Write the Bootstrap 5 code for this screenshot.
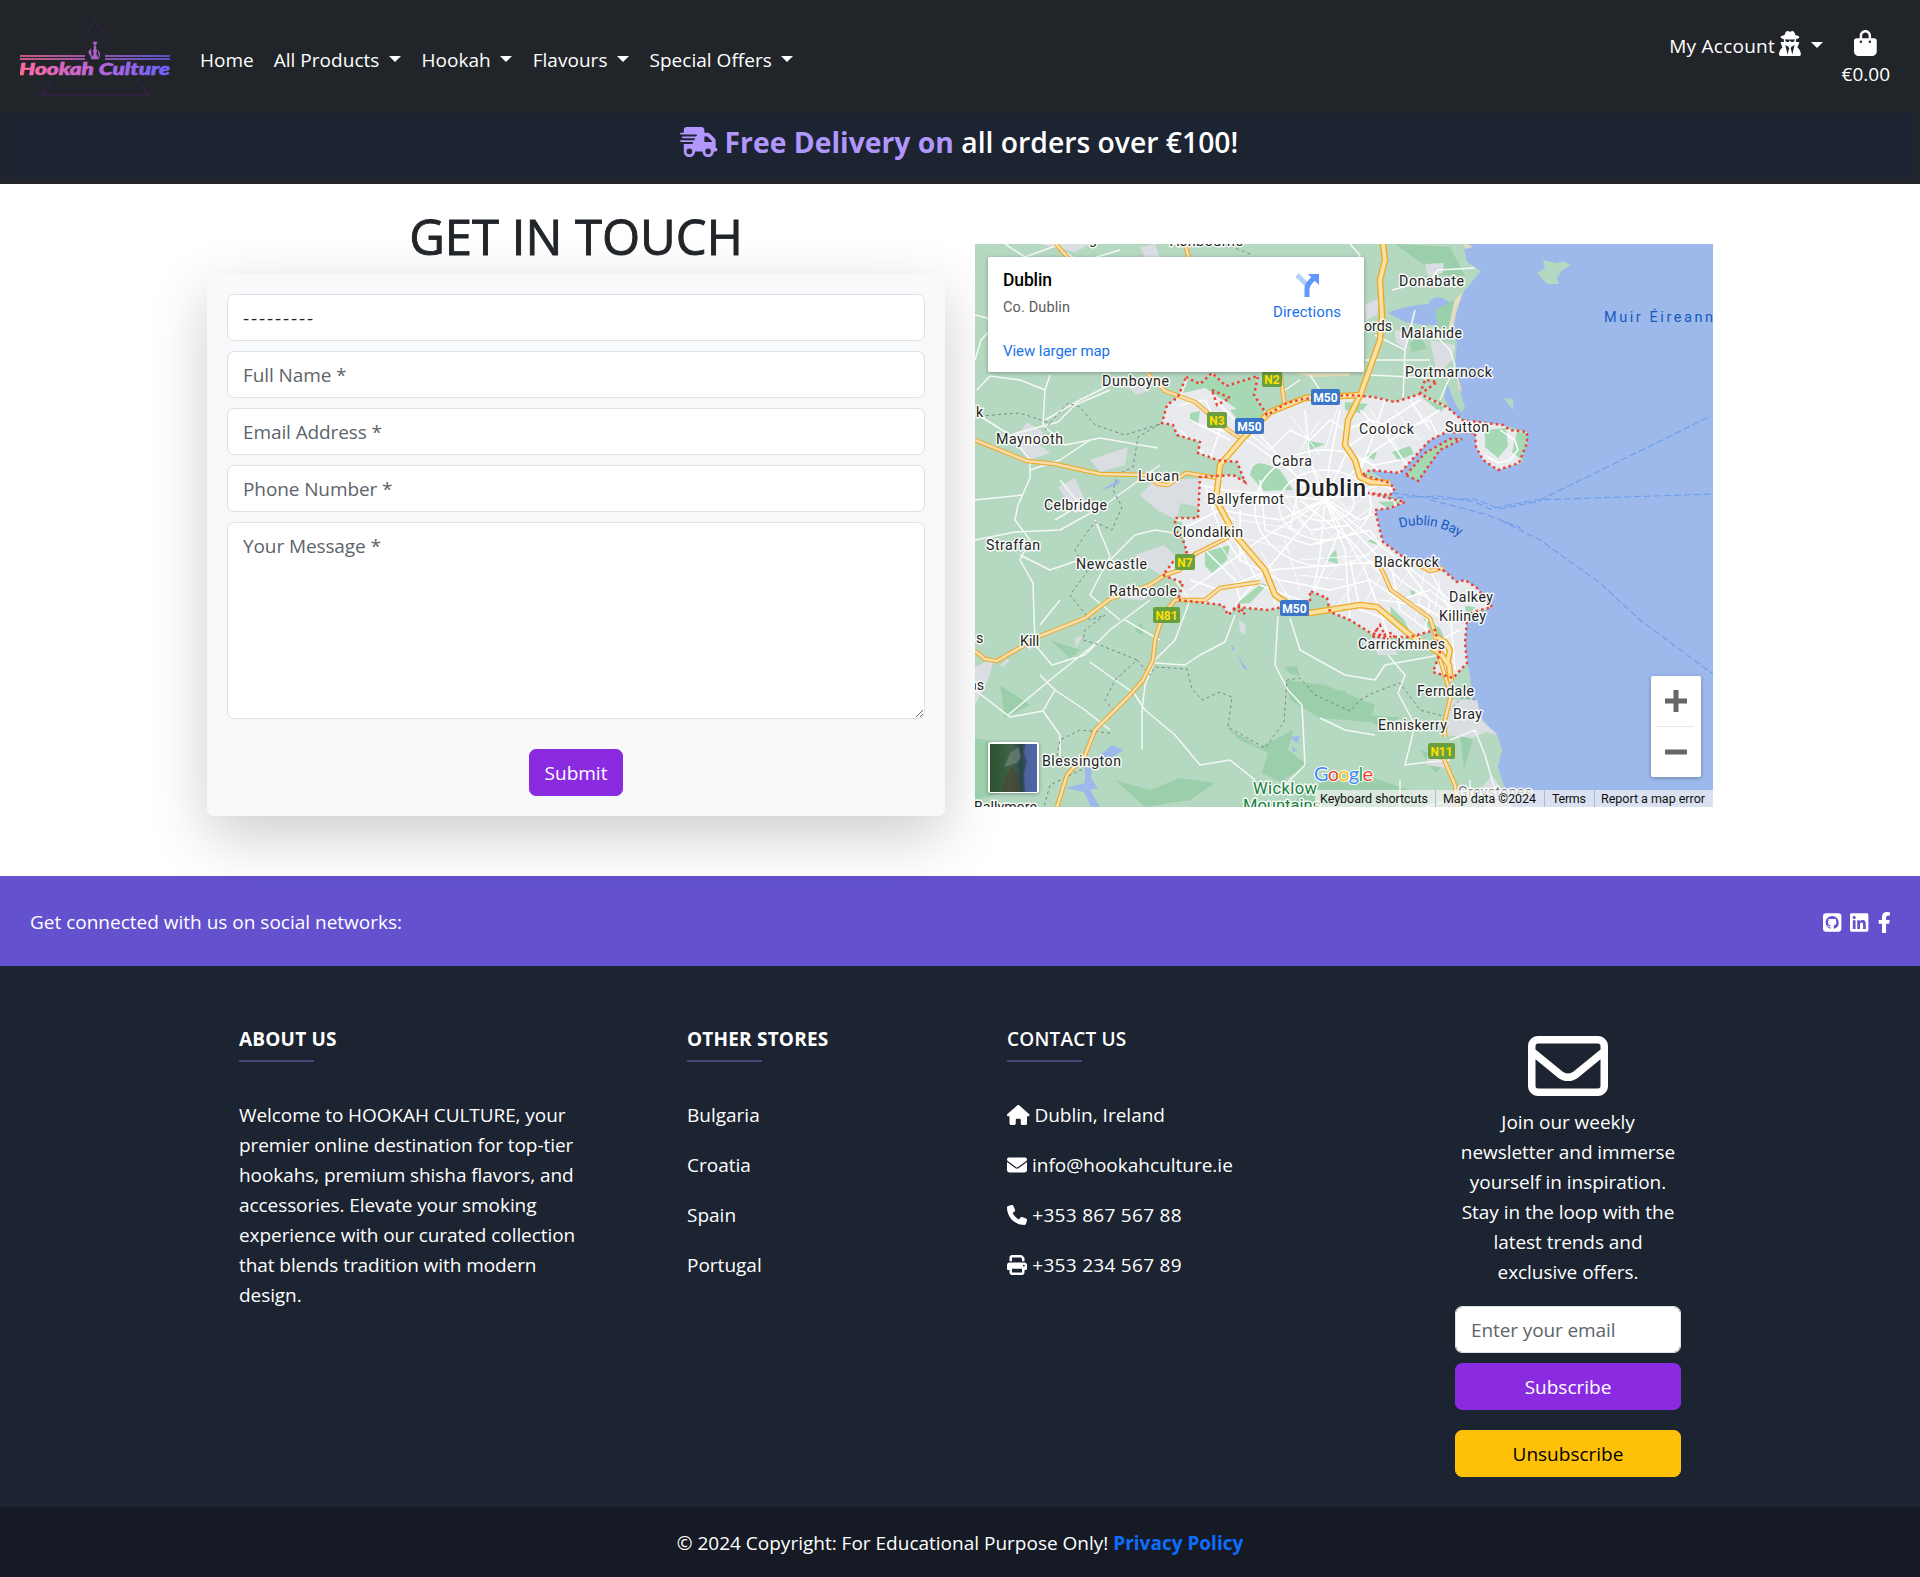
<!DOCTYPE html>
<html lang="en">
<head>
<meta charset="utf-8">
<meta name="viewport" content="width=device-width, initial-scale=1">
<title>Hookah Culture - Contact</title>
<link href="https://cdn.jsdelivr.net/npm/bootstrap@5.3.0/dist/css/bootstrap.min.css" rel="stylesheet">
<style>
html{font-size:20px}
body{font-family:"Open Sans","Noto Sans",sans-serif;font-size:19px;line-height:30px;overflow-x:hidden}
.ico{height:1em;fill:currentColor;overflow:visible;vertical-align:-.125em;font-size:20px}
.site-header{height:184px}
.site-nav{height:113px;padding:6px 20px 0}
.site-nav .nav-link{color:#fff;padding:10px;line-height:30px;white-space:nowrap}
.site-nav .dropdown-toggle::after{margin-left:9.5px;vertical-align:5px;border-top-width:6px;border-left-width:6px;border-right-width:6px}
.menu-main .dropdown-toggle{letter-spacing:.03px;padding-right:10.5px}
.brand-logo{width:150px;height:90px;margin-right:20px}
.account{margin-right:-1px;letter-spacing:.25px;padding-top:1px}
.account .ico{font-size:25px;margin-left:-1px}
.bag .ico{font-size:26px;vertical-align:-.19em}
.bag .nav-link{padding-top:9px}
.delivery{height:66px;margin:0 5px 5px 3px;background:#1c2331;font-size:28.3px;font-weight:600;line-height:58px}
.delivery .ico{font-size:30px}
.lilac{color:#b197fc;font-weight:700}
.eighty{width:80%;max-width:none}
.contact-area{height:692px;padding-top:22px}
.touch-title{font-size:49px;font-weight:500;line-height:60px;margin-bottom:8px;-webkit-text-stroke:.9px #212529}
.contact-form{padding:20px;height:542px;box-shadow:0 20px 60px rgba(0,0,0,.2)}
.contact-form .form-control,.newsletter .form-control{font-size:19px;height:47px;padding:7px 15px;line-height:30px;margin-bottom:10px;border-radius:7px}
.form-control::placeholder{color:#5d646b;opacity:1;letter-spacing:-.1px}
.contact-form select.form-control{letter-spacing:1.9px}
.contact-form textarea.form-control{height:197px;margin-bottom:30px;padding-top:8px}
.btn{font-size:19px;line-height:30px;height:47px;border-radius:7px;padding:7px 15px}
.btn-violet,.btn-violet:hover{background:#8a2be2;border-color:#8a2be2;color:#fff}
.map-frame{display:block;width:100%;height:563px;margin-top:38px;font-family:Roboto,sans-serif}
.social-band{height:90px;background:#6351ce;padding:2px 30px 0}
.social-icons{gap:9px}
.social-icons .ico{font-size:21px}
.social-icons .ico-f{width:12.500px}
.footer-main{background:#1c2331;height:541px;padding-top:58px}
.footer-main h6{font-size:19px;line-height:30px;margin:0;letter-spacing:.2px}
.rule{width:75px;height:2px;background:#484776;margin:6px 0 38px}
.footer-main p{margin-bottom:20px}
.about-text{letter-spacing:-.07px}
.tel{letter-spacing:.3px}
.newsletter{padding-top:12px}
.newsletter p{margin:0 0 19px;letter-spacing:-.05px}
.newsletter .big{font-size:80px;display:block;margin:-10px auto 1px}
.unsub{margin-top:20px}
.copybar{background:#151a25;height:70px;padding-top:2px}
.copybar a{color:#0d6efd;text-decoration:none;font-weight:700}
</style>
</head>
<body>
<header class="site-header bg-dark text-white overflow-hidden">
<nav class="site-nav d-flex align-items-center">
<svg class="brand-logo" viewBox="20 15 150 90">
<defs><linearGradient id="lg" gradientUnits="userSpaceOnUse" x1="20" y1="0" x2="170" y2="0"><stop offset="0" stop-color="#ff6b9d"/><stop offset=".5" stop-color="#bd65d8"/><stop offset="1" stop-color="#6a63ff"/></linearGradient></defs>
<path d="M86 35 95 21 105 35M52 81 41 95H149L138 81" fill="none" stroke="#33204a" stroke-width="1.4"/>
<path d="M20 56H85M105 56H170M20 59H85M105 59H170" stroke="url(#lg)" stroke-width="1.8" opacity=".75"/>
<path d="M93 42h4l-1 3h-2zM94 46h2v4h-2zM93 50h4l-1 4 3 5H91l3-5zM91 49q-4 2-1 6l2 4M98 50q3 4 1 8" fill="#ad60ca" stroke="#ad60ca" stroke-width=".5"/>
<text x="19" y="75" font-family="Lato,sans-serif" font-weight="900" font-style="italic" font-size="16.500" textLength="151" lengthAdjust="spacingAndGlyphs" fill="url(#lg)" stroke="url(#lg)" stroke-width=".6">Hookah Culture</text>
</svg>
<ul class="navbar-nav menu-main flex-row">
<li><a class="nav-link" href="#">Home</a></li>
<li><a class="nav-link dropdown-toggle" href="#">All Products</a></li>
<li><a class="nav-link dropdown-toggle" href="#">Hookah</a></li>
<li><a class="nav-link dropdown-toggle" href="#">Flavours</a></li>
<li><a class="nav-link dropdown-toggle" href="#">Special Offers</a></li>
</ul>
<ul class="navbar-nav flex-row ms-auto">
<li class="account"><a class="nav-link dropdown-toggle" href="#">My Account <svg class="ico" viewBox="0 0 448 512"><path d="M224 16c-6.7 0-10.8-2.8-15.5-6.1C201.9 5.4 194 0 176 0c-30.5 0-52 43.7-66 89.4C62.7 98.1 32 112.2 32 128c0 14.3 25 27.1 64.6 35.9c-.4 4-.6 8-.6 12.1c0 17 3.3 33.2 9.3 48H45.4C38 224 32 230 32 237.4c0 1.7 .3 3.4 1 5l38.8 96.9C28.2 371.8 0 423.8 0 482.3C0 498.7 13.3 512 29.7 512H418.3c16.4 0 29.7-13.3 29.7-29.7c0-58.5-28.2-110.4-71.7-143L415 242.4c.6-1.6 1-3.3 1-5c0-7.4-6-13.4-13.4-13.4H342.7c6-14.8 9.3-31 9.3-48c0-4.1-.2-8.1-.6-12.1C391 155.1 416 142.3 416 128c0-15.8-30.7-29.9-78-38.6C324 43.7 302.5 0 272 0c-18 0-25.9 5.4-32.5 9.9c-4.8 3.3-8.8 6.1-15.5 6.1zm56 208H267.6c-16.5 0-31.1-10.6-36.3-26.2c-2.3-7-12.2-7-14.5 0c-5.2 15.6-19.9 26.2-36.3 26.2H168c-22.1 0-40-17.9-40-40V169.6c28.2 4.1 61 6.4 96 6.4s67.8-2.3 96-6.4V184c0 22.1-17.9 40-40 40zm-88 96l16 32L176 480 128 288l64 32zm128-32L272 480 240 352l16-32 64-32z"/></svg></a></li>
<li class="bag"><a class="nav-link text-center" href="#"><svg class="ico" viewBox="0 0 448 512"><path fill-rule="evenodd" d="M160 112c0-35.3 28.7-64 64-64s64 28.7 64 64v48H160V112zm-48 48H48c-26.5 0-48 21.5-48 48V416c0 53 43 96 96 96H352c53 0 96-43 96-96V208c0-26.5-21.5-48-48-48H336V112C336 50.1 285.9 0 224 0S112 50.1 112 112v48zm24 48a24 24 0 1 1 0 48 24 24 0 1 1 0-48zm152 24a24 24 0 1 1 48 0 24 24 0 1 1-48 0z"/></svg><br>€0.00</a></li>
</ul>
</nav>
<div class="delivery text-center"><span class="lilac"><svg class="ico" viewBox="0 0 640 512"><path d="M112 0C85.5 0 64 21.5 64 48V96H16c-8.8 0-16 7.2-16 16s7.2 16 16 16H64 272c8.8 0 16 7.2 16 16s-7.2 16-16 16H64 48c-8.8 0-16 7.2-16 16s7.2 16 16 16H64 240c8.8 0 16 7.2 16 16s-7.2 16-16 16H64 16c-8.8 0-16 7.2-16 16s7.2 16 16 16H64 208c8.8 0 16 7.2 16 16s-7.2 16-16 16H64V416c0 53 43 96 96 96s96-43 96-96H384c0 53 43 96 96 96s96-43 96-96h32c17.7 0 32-14.3 32-32s-14.3-32-32-32V288 256 237.3c0-17-6.7-33.3-18.7-45.3L512 114.7c-12-12-28.3-18.7-45.3-18.7H416V48c0-26.5-21.5-48-48-48H112zM544 237.3V256H416V160h50.7L544 237.3zM160 368a48 48 0 1 1 0 96 48 48 0 1 1 0-96zm272 48a48 48 0 1 1 96 0 48 48 0 1 1-96 0z"/></svg> Free Delivery on</span> all orders over €100!</div>
</header>

<main class="contact-area">
<div class="container eighty"><div class="row">
<div class="col-6">
<h1 class="touch-title text-center">GET IN TOUCH</h1>
<form class="contact-form bg-light rounded text-center">
<select class="form-control"><option>---------</option></select>
<input class="form-control" placeholder="Full Name *">
<input class="form-control" placeholder="Email Address *">
<input class="form-control" placeholder="Phone Number *">
<textarea class="form-control" placeholder="Your Message *"></textarea>
<button type="button" class="btn btn-violet">Submit</button>
</form>
</div>
<div class="col-6">
<svg class="map-frame" viewBox="975 244 738 563">
<defs>
<path id="city" d="M1186 377 1200 384 1212 373 1226 386 1258 376 1254 395 1267 415 1287 403 1303 399 1350 395 1373 397 1395 402 1420 394 1447 407 1462 420 1503 425 1510 430 1527 432 1527 443 1519 463 1498 470 1483 460 1476 447 1475 433 1447 432 1430 440 1418 453 1400 473 1370 470 1362 475 1387 482 1395 488 1390 495 1368 493 1405 502 1390 508 1375 510 1379 527 1383 542 1403 557 1443 570 1457 582 1465 580 1477 588 1492 607 1473 612 1467 620 1465 643 1467 663 1453 678 1433 672 1440 653 1435 630 1410 637 1377 637 1350 620 1330 612 1327 598 1310 591 1310 602 1267 610 1237 607 1228 615 1223 605 1178 600 1183 583 1163 575 1173 562 1187 552 1183 540 1175 530 1175 518 1198 518 1200 477 1233 475 1245 482 1237 462 1217 460 1198 453 1200 442 1177 435 1173 425 1162 423 1167 405 1178 397Z"/>
<path id="mainRoads" d="M975 440 1027 461 1055 464 1100 474 1145 475 1158 484 1168 485 1186 473 1218 478M1147 373 1165 391 1195 402 1228 430 1243 440M1056 244 1068 258M1185 244 1189 258M1280 373 1285 407M975 651 985 659 997 661 1040 636 1085 618 1110 599 1150 585 1165 575 1180 570 1195 554 1231 536M1057 807 1067 775 1085 755 1095 730 1130 695 1143 680 1153 660 1155 640 1163 615 1175 600 1205 600 1220 588 1260 582M1381 568 1391 590 1430 618 1437 639M1415 563 1430 571 1443 568M1438 653 1451 695 1445 720 1445 737M1443 757 1455 785 1457 807"/>
<path id="motorway" d="M1383 244 1385 260 1380 280 1382 315 1380 340 1361 393 1348 420 1345 445 1355 460 1360 477 1370 482 1390 483M1361 395 1305 398 1270 412 1243 438 1220 465 1216 500 1235 535 1265 570 1275 595 1290 605 1310 613 1335 609 1360 605 1377 607 1410 635 1440 653 1449 665 1451 681M1447 665 1450 650 1445 642 1434 636"/>
<clipPath id="cityClip"><use href="#city"/></clipPath>
<linearGradient id="sat"><stop offset="0" stop-color="#2c512f"/><stop offset=".45" stop-color="#40614a"/><stop offset=".66" stop-color="#2b494c"/><stop offset=".76" stop-color="#4c62a2"/><stop offset="1" stop-color="#5165a3"/></linearGradient>
<filter id="soft" x="-10%" y="-20%" width="120%" height="150%"><feDropShadow dx="0" dy="1" stdDeviation="2" flood-opacity=".3"/></filter>
</defs>
<rect x="975" y="244" width="738" height="563" fill="#9db9ec"/>
<path fill="#b5d8c0" d="M975 244H1463L1467 262 1481 271 1465 290 1455 307 1452 328 1457 343 1455 363 1457 380 1465 408 1461 412 1455 403 1447 383 1444 397 1450 410 1462 420 1503 425 1527 432 1522 463 1498 470 1483 460 1475 433 1447 432 1430 440 1418 453 1400 473 1370 470 1395 488 1390 495 1405 502 1375 510 1383 542 1403 557 1443 570 1457 582 1477 588 1492 607 1467 620 1465 643 1470 677 1473 700 1483 720 1498 737 1502 750 1498 767 1503 783 1512 807H975ZM1537 273 1545 268 1543 260 1556 263 1563 261 1571 265 1562 270 1557 278 1559 284 1547 284ZM1504 398 1513 399 1513 410Z"/>
<path fill="#9db9ec" d="M1388 313Q1402 306 1428 304 1435 291 1450 303L1440 313 1438 325 1425 325 1405 322ZM1101 490 1120 479 1119 484 1105 489ZM1097 758 1112 745 1123 750 1115 756 1106 760ZM1065 788 1085 783 1085 767 1092 768 1091 778 1098 788 1090 790 1100 807H1091L1084 792ZM1237 655 1248 670 1244 669ZM1231 644 1235 650 1233 651ZM1290 737 1300 736 1297 743ZM1292 746 1297 751 1293 752Z"/>
<g fill="#9bcfab">
<path d="M1285 680 1325 685 1375 705 1370 722 1320 718 1290 700ZM1225 727 1260 747 1293 730 1288 750 1308 765 1280 782 1262 773 1268 753 1240 740ZM1115 780 1150 790 1180 778 1215 783 1190 800 1145 807ZM975 738 1010 745 1015 790 975 800ZM1305 790 1350 770 1410 790 1425 807H1290ZM1284 667 1297 666 1300 676 1289 673ZM1135 625 1143 624 1143 635 1136 632ZM1325 690 1345 691 1350 700 1328 703ZM1340 530 1375 533 1361 540ZM1025 360 1055 365 1045 373ZM1230 345 1260 352 1255 365 1238 360ZM1410 343 1420 337 1427 348 1412 352ZM1435 310 1454 300 1448 328 1438 327ZM1000 685 1030 705 1005 718ZM1050 640 1080 650 1070 658ZM1360 715 1400 717 1385 730ZM1420 750 1450 760 1435 773ZM1460 735 1473 740 1464 770ZM1395 244 1450 247 1465 276 1438 275Z"/>
</g>
<g fill="#dadee3">
<path d="M1010 435 1022 430 1027 422 1043 432 1040 445 1050 453 1030 460 1018 448ZM1090 460 1128 447 1125 465 1100 472ZM1058 487 1075 478 1085 500 1095 508 1075 513ZM1155 479H1200L1199 507 1180 503 1177 520 1157 510 1140 495ZM1135 555 1164 545 1180 560 1165 578 1145 565ZM1125 588 1150 587 1145 600 1120 599ZM975 667 995 657 988 680 975 705ZM1025 640 1035 639 1030 652ZM1140 247 1155 244 1160 258 1145 258ZM1120 380 1145 377 1150 390 1137 395ZM1040 244 1090 244 1075 252ZM1075 638 1083 635 1076 648ZM1000 665 1007 659 1010 661 1002 667ZM1365 305 1380 298 1377 315 1366 320ZM1395 330 1410 333 1406 350 1396 342ZM1430 340 1455 345 1452 360 1437 375ZM1425 264 1444 263 1443 273 1428 276ZM1450 700 1477 700 1482 721 1498 735 1486 732 1472 738 1446 735ZM1427 755 1448 762 1445 768 1427 765ZM1492 775 1513 807H1485L1480 790ZM1370 637 1390 640 1398 655 1378 655ZM1239 620 1246 625 1245 635 1240 632Z"/></g>
<path fill="#f5e2b8" d="M1463 244H1468L1473 247 1465 249ZM1463 292 1457 310 1453 328 1449 328 1455 300ZM1455 365 1462 392 1458 388ZM1295 373H1350V376L1310 377Z" opacity=".8"/>
<use href="#city" fill="#e8eaed"/>
<g fill="#a5d9b3" clip-path="url(#cityClip)">
<path d="M1189 377 1255 375 1264 410 1237 409 1205 388 1183 393ZM1250 475Q1252 460 1265 464L1280 470 1293 490 1264 491ZM1230 410 1260 405 1267 417 1242 425ZM1190 413 1200 411 1198 424 1190 422ZM1392 452 1410 446 1414 454 1398 460ZM1365 455 1377 452 1374 460ZM1345 402 1368 404 1360 413 1345 410ZM1420 396 1445 407 1440 412ZM1485 430 1506 428 1508 446 1498 458 1485 447ZM1517 432 1528 433 1524 462 1512 452ZM1205 552 1230 545 1227 560 1212 573 1205 566ZM1170 520 1182 522 1185 545 1173 556ZM1310 591 1326 598 1329 611 1315 605ZM1236 604 1262 583 1267 585 1250 603ZM1367 541 1378 538 1377 545ZM1390 606 1404 620 1410 632 1392 620ZM1410 590 1416 592 1412 597ZM1423 618 1440 628 1445 640 1430 630ZM1465 606 1475 607 1467 618ZM1325 560 1336 550 1338 564ZM1306 440 1325 444 1310 450Z"/></g>
<path fill="#a5d9b3" d="M1406 475 1425 453 1450 439 1462 439 1440 450 1418 481ZM1378 502 1404 501 1388 508Z"/>
<g fill="none" stroke="#f5f8f6" stroke-width="1.500" stroke-linejoin="round">
<path d="M975 315 987 318 992 328 981 340 975 360M1005 244 1025 257 1055 246 1080 262 1120 250M1145 260 1168 265M1050 375 1045 390 1020 380 990 376 977 390M1045 390 1043 425 1065 445 1100 438 1158 448M975 413 1010 435 1058 422 1075 405 1110 390M1010 435 1030 460 1030 478 1018 505 1015 520 1030 540 1020 560 1033 583 1035 645 1052 665 1085 655 1110 630 1150 600M1022 495 975 500M975 540 1015 532 1060 530 1105 505 1160 465M1120 380 1080 400 1045 420M1065 445 1090 440 1060 460 1030 470M1095 520 1110 556 1090 595 1120 620M1110 560 1135 535 1155 530 1200 537M1175 580 1190 600 1175 640 1155 660M1155 660 1145 685 1142 710 1142 750M1155 663 1185 665 1200 655 1225 642 1235 615M975 690 1010 717 1043 711 1060 735 1060 765M1007 716 1050 680 1100 640M1043 711 1055 690 1040 675M1055 690 1085 710 1110 730M1090 662 1115 680 1134 693 1145 710 1175 735 1200 765 1230 760 1255 780M1278 616 1275 665 1288 690 1302 705 1305 765 1280 790M1290 618 1300 650 1345 675 1375 680 1385 665 1440 655M1388 655 1405 675 1398 693 1415 725 1405 765 1420 763 1450 760M1450 740 1475 730 1485 755 1495 790M1400 780 1400 807M1320 718 1345 730 1375 735M1425 807 1470 795 1470 780M1392 290 1430 280 1438 270 1475 268M1375 335 1405 350 1415 310M1405 350 1403 400M1365 360 1430 360M1370 375 1430 378M1430 330 1450 350 1455 365 1440 400M1350 244 1360 255 1350 280M1310 375 1320 390 1335 395M1270 375 1285 390 1300 380M1025 340 1060 350 1100 340M1060 480 1080 505 1055 520M1125 620 1160 640M1060 600 1040 625M1085 558 1050 570 1020 555"/>
</g>
<g clip-path="url(#cityClip)" fill="none" stroke="#fff" stroke-width="1.500" stroke-linejoin="round">
<ellipse cx="1325" cy="503" rx="29" ry="18"/><ellipse cx="1325" cy="505" rx="46" ry="35"/><ellipse cx="1325" cy="508" rx="70" ry="58"/>
<path d="M1325 500 1290 470 1240 435 1200 425M1325 500 1310 460 1305 410M1325 500 1330 460 1340 410M1325 500 1375 450 1440 410M1325 500 1350 445 1420 400M1325 500 1275 495 1225 490 1200 485M1325 500 1280 520 1220 510 1180 530M1325 500 1260 540 1190 590M1325 500 1275 560 1235 605M1325 500 1320 555 1310 610M1325 500 1345 550 1350 620M1325 500 1365 570 1390 640M1325 500 1400 580 1460 620M1325 500 1380 545 1450 600M1325 500 1380 485 1395 490"/>
<path d="M1180 405 1205 400 1220 430 1210 460 1180 430M1215 400 1245 430 1270 450 1290 430 1310 440 1330 420 1345 430 1370 420 1400 430 1430 420 1440 440M1190 420 1230 440M1205 485 1220 530 1240 560 1280 580 1330 590 1370 580 1400 600 1430 590 1455 610M1190 535 1235 540 1260 585 1300 600M1240 510 1240 560M1260 480 1265 530 1310 545 1370 530 1380 545M1205 550 1235 580 1240 600M1190 580 1220 590 1270 570 1335 565 1400 560 1430 600 1425 630M1390 560 1400 610 1440 640 1460 630M1430 570 1450 610 1455 670M1350 560 1360 610 1390 620M1380 600 1420 605 1445 620M1360 410 1390 440 1410 470M1385 400 1370 445 1360 470M1410 400 1430 430M1345 455 1375 465 1400 460M1260 435 1300 480 1290 530M1340 530 1315 590M1295 480 1360 520 1378 512M1300 500 1350 540 1395 590M1280 500 1310 530 1350 525M1500 430 1515 440 1518 450 1510 460 1498 463 1485 455"/>
<path stroke-width=".9" d="M1300 470 1340 520M1310 465 1360 525M1290 480 1330 535M1285 495 1320 545M1295 515 1350 480M1300 525 1370 475M1310 535 1375 490M1320 545 1375 505M1295 500 1345 465M1285 540 1300 590M1260 550 1290 600M1220 545 1250 590M1360 540 1325 580M1370 560 1335 610M1385 570 1360 610M1410 570 1390 600M1425 570 1415 620M1440 580 1435 610M1240 520 1300 530M1230 535 1290 550M1300 560 1370 555M1340 400 1325 450M1290 415 1320 455M1320 420 1300 450M1370 410 1400 450M1395 410 1420 440M1205 500 1235 520M1300 575 1345 580M1270 570 1275 605"/></g>
<g fill="none" stroke="#707b78" stroke-dasharray="3 3" opacity=".85"><path d="M980 416 1020 413 1050 423 1068 403 1080 407 1095 425 1125 435 1160 424M1050 423 1045 430M1160 424 1138 437 1133 467 1118 474 1113 490 1122 507 1112 530 1095 522 1085 535 1075 550 1087 572 1070 595 1090 620 1105 615 1085 630 1083 640 1100 645 1137 660 1115 680 1105 700 1113 710M1137 660 1150 675 1155 667 1187 669 1192 689 1202 700 1220 692 1232 697 1228 727 1265 748 1284 722 1287 680 1300 678 1315 695 1350 711 1360 700 1375 692 1400 683 1420 710 1443 716 1463 697 1475 700M1110 733 1080 730 1060 740 1057 755 1085 768 1050 785 1044 807M1225 244 1250 254"/></g>
<g fill="none" stroke="#719eeb" stroke-width="1.2" stroke-dasharray="7 3"><path d="M1387 498 1440 496 1475 502 1490 509 1535 500 1713 494M1392 493 1440 499 1475 499 1500 509 1540 501M1540 500 1711 416M1430 500 1485 514 1521 528M1500 520 1540 540 1600 583 1640 620 1713 674"/></g>
<g fill="none" stroke-linejoin="round">
<use href="#mainRoads" stroke="#eda820" stroke-width="4.500"/><use href="#mainRoads" stroke="#f8deb0" stroke-width="2.500"/>
<use href="#motorway" stroke="#eda820" stroke-width="6.500"/><use href="#motorway" stroke="#fbe2a4" stroke-width="3.800"/>
</g>
<g fill="none" stroke="#ea4335" stroke-width="2.500" stroke-dasharray="2.5 3.2"><use href="#city"/><path d="M1406 475 1425 453 1450 439 1462 439 1440 450 1418 481ZM1420 394 1425 380 1437 382 1422 393M1212 390 1230 398 1217 405ZM1233 608 1245 614 1238 604M1375 630 1388 642 1380 625 1372 637 1392 633 1402 648"/></g>

<g font-size="14.2" fill="#252525" stroke="#fff" stroke-opacity=".9" stroke-width="3" paint-order="stroke" stroke-linejoin="round">
<text x="1170" y="246" textLength="73">Ashbourne</text><text x="1089" y="244">g</text>
<text x="1399" y="286" textLength="65">Donabate</text><text x="1364" y="331">ords</text><text x="1401" y="338" textLength="61">Malahide</text><text x="1405" y="377" textLength="87">Portmarnock</text>
<text x="1102" y="386" textLength="67">Dunboyne</text><text x="976" y="417">k</text><text x="996" y="444" textLength="67">Maynooth</text><text x="1138" y="481" textLength="41">Lucan</text><text x="1044" y="510" textLength="63">Celbridge</text>
<text x="1272" y="466" textLength="40">Cabra</text><text x="1207" y="504" textLength="77">Ballyfermot</text><text x="1359" y="434" textLength="55">Coolock</text><text x="1445" y="432" textLength="44">Sutton</text>
<text x="1173" y="537" textLength="70">Clondalkin</text><text x="986" y="550" textLength="54">Straffan</text><text x="1076" y="569" textLength="71">Newcastle</text><text x="1109" y="596" textLength="68">Rathcoole</text><text x="1020" y="646">Kill</text><text x="976" y="643">s</text><text x="969" y="690">as</text><text x="1042" y="766" textLength="79">Blessington</text><text x="974" y="812">Ballymore</text>
<text x="1374" y="567" textLength="65">Blackrock</text><text x="1449" y="602" textLength="44">Dalkey</text><text x="1439" y="621" textLength="47">Killiney</text><text x="1358" y="649" textLength="87">Carrickmines</text><text x="1417" y="696" textLength="57">Ferndale</text><text x="1453" y="719" textLength="29">Bray</text><text x="1378" y="730" textLength="69">Enniskerry</text><text x="1458" y="797" textLength="74" fill="#777">Greystones</text>
<text x="1295" y="496" font-size="24" font-weight="500" textLength="71" fill="#202124">Dublin</text>
<g fill="#18813d" font-size="16.500"><text x="1253" y="794" textLength="64">Wicklow</text><text x="1243" y="811">Mountains</text></g>
</g>
<g fill="#185abc"><text x="1604" y="322" font-size="14.500" textLength="109">Muir Éireann</text><path id="bay" d="M1400 528Q1430 519 1462 538" fill="none"/><text font-size="13.500"><textPath href="#bay" textLength="62">Dublin Bay</textPath></text></g>
<g font-size="12" font-weight="700" text-anchor="middle">
<g fill="#3a77c9"><rect x="1311" y="389" width="29" height="16" rx="2"/><rect x="1235" y="418" width="29" height="16" rx="2"/><rect x="1280" y="600" width="29" height="16" rx="2"/></g>
<g fill="#6a9f40"><rect x="1262" y="371" width="20" height="16" rx="2"/><rect x="1207" y="412" width="20" height="16" rx="2"/><rect x="1175" y="554" width="20" height="16" rx="2"/><rect x="1153" y="607" width="27" height="16" rx="2"/><rect x="1428" y="743" width="27" height="16" rx="2"/></g>
<g fill="#fff"><text x="1325.500" y="401.500">M50</text><text x="1249.500" y="430.500">M50</text><text x="1294.500" y="612.500">M50</text></g>
<g fill="#ffe000"><text x="1272" y="383.500">N2</text><text x="1217" y="424.500">N3</text><text x="1185" y="566.500">N7</text><text x="1166.500" y="619.500">N81</text><text x="1441.500" y="755.500">N11</text></g></g>
<rect x="988" y="257" width="376" height="115" rx="2" fill="#fff" filter="url(#soft)"/>
<text x="1003" y="286" font-size="17.500" font-weight="500" textLength="49">Dublin</text><text x="1003" y="312" font-size="14.500" fill="#5b5b5b" textLength="67">Co. Dublin</text>
<g fill="#1a73e8" font-size="15"><text x="1003" y="356" textLength="107">View larger map</text><text x="1273" y="317" textLength="68">Directions</text></g>
<path d="m1297 275 10 10" stroke="#b5cefa" stroke-width="5"/><path d="M1307 297v-8q0-4 4-8l4-4" fill="none" stroke="#6396fa" stroke-width="5"/><path d="M1308 274h11v11z" fill="#6396fa"/>
<rect x="1651" y="676" width="50" height="101" rx="2" fill="#fff" filter="url(#soft)"/><path d="M1657 726.500h37" stroke="#e6e6e6"/><path d="M1665 701h22M1676 690v22M1665 752h22" stroke="#666" stroke-width="5"/>
<rect x="988" y="742" width="51" height="51" rx="3" fill="#fff" filter="url(#soft)"/><rect x="990" y="744" width="47" height="48" fill="url(#sat)"/><path d="M1001 792 1006 776 1012 766 1018 778 1021 792Z" fill="#4c4630" opacity=".7"/><path d="M1010 753 1018 747 1022 757 1017 763 1004 767Z" fill="#7d8d88" opacity=".55"/><path d="M1020 744H1026L1023 752 1027 762 1023 775 1025 792H1020Z" fill="#24443f" opacity=".6"/>
<g font-family="Lato,sans-serif" font-size="20" stroke="#fff" stroke-width="2" paint-order="stroke"><text x="1314" y="781" textLength="59"><tspan fill="#4285f4">G</tspan><tspan fill="#ea4335">o</tspan><tspan fill="#fbbc04">o</tspan><tspan fill="#4285f4">g</tspan><tspan fill="#34a853">l</tspan><tspan fill="#ea4335">e</tspan></text></g>
<path d="M1315 790H1713V807H1315Z" fill="#f3f3f3" fill-opacity=".7"/><path d="M1435.500 790v17M1544.500 790v17M1594.500 790v17" stroke="#a5bce2"/>
<g font-size="12.500" fill="#111"><text x="1320" y="803" textLength="108">Keyboard shortcuts</text><text x="1443" y="803" textLength="93">Map data ©2024</text><text x="1552" y="803" textLength="34">Terms</text><text x="1601" y="803" textLength="104">Report a map error</text></g>
</svg>
</div>
</div></div>
</main>

<footer class="text-white">
<section class="social-band d-flex justify-content-between align-items-center">
<span>Get connected with us on social networks:</span>
<div class="social-icons d-flex align-items-center">
<svg class="ico" viewBox="0 0 448 512"><path d="M64 32C28.700 32 0 60.700 0 96V416c0 35.300 28.700 64 64 64H384c35.300 0 64-28.700 64-64V96c0-35.300-28.700-64-64-64Z"/><g transform="translate(64 96) scale(20)" fill="#6351ce"><path d="M8 0C3.580 0 0 3.580 0 8c0 3.540 2.290 6.530 5.470 7.590.4.070.55-.17.55-.38 0-.19-.01-.82-.01-1.490-2.010.37-2.530-.49-2.690-.94-.09-.23-.48-.94-.82-1.130-.28-.15-.68-.52-.01-.53.63-.01 1.080.58 1.230.82.72 1.210 1.870.87 2.330.66.07-.52.28-.87.51-1.070-1.780-.2-3.640-.89-3.640-3.950 0-.87.31-1.590.82-2.150-.08-.2-.36-1.020.08-2.120 0 0 .67-.21 2.200.82.64-.18 1.320-.27 2-.27s1.360.09 2 .27c1.530-1.040 2.200-.82 2.200-.82.44 1.100.16 1.920.08 2.120.51.56.82 1.270.82 2.150 0 3.070-1.870 3.750-3.650 3.950.29.25.54.73.54 1.480 0 1.070-.01 1.930-.01 2.200 0 .21.15.46.55.38A8.010 8.010 0 0 0 16 8c0-4.420-3.580-8-8-8z"/></g></svg>
<svg class="ico" viewBox="0 0 448 512"><path d="M416 32H31.900C14.300 32 0 46.500 0 64.300v383.400C0 465.500 14.300 480 31.900 480H416c17.600 0 32-14.500 32-32.300V64.300c0-17.800-14.400-32.300-32-32.300zM135.400 416H69V202.200h66.500V416zm-33.200-243c-21.300 0-38.500-17.300-38.500-38.500S80.900 96 102.200 96c21.200 0 38.500 17.300 38.500 38.500 0 21.300-17.200 38.500-38.500 38.500zm282.100 243h-66.400V312c0-24.800-.5-56.700-34.500-56.700-34.600 0-39.900 27-39.900 54.900V416h-66.400V202.200h63.700v29.200h.9c8.900-16.800 30.600-34.500 62.900-34.500 67.200 0 79.700 44.300 79.700 101.900V416z"/></svg>
<svg class="ico ico-f" viewBox="22 0 275 512"><path d="M279.140 288l14.220-92.660h-88.910v-60.130c0-25.350 12.420-50.060 52.240-50.060h40.420V6.260S260.430 0 225.360 0c-73.220 0-121.080 44.380-121.080 124.720v70.620H22.890V288h81.390v224h100.170V288z"/></svg>
</div>
</section>
<section class="footer-main">
<div class="container eighty"><div class="row">
<div class="col-3 mx-auto"><h6 class="fw-bold">ABOUT US</h6><div class="rule"></div><p class="about-text">Welcome to HOOKAH CULTURE, your<br>premier online destination for top-tier<br>hookahs, premium shisha flavors, and<br>accessories. Elevate your smoking<br>experience with our curated collection<br>that blends tradition with modern<br>design.</p></div>
<div class="col-2 mx-auto"><h6 class="fw-bold">OTHER STORES</h6><div class="rule"></div><p>Bulgaria</p><p>Croatia</p><p>Spain</p><p>Portugal</p></div>
<div class="col-3 mx-auto"><h6 class="fw-semibold">CONTACT US</h6><div class="rule"></div>
<p><svg class="ico" viewBox="0 0 576 512"><path d="M575.800 255.500c0 18-15 32.100-32 32.100h-32l.7 160.200c0 2.700-.2 5.400-.5 8.100V472c0 22.100-17.900 40-40 40H392c-22.100 0-40-17.900-40-40V384c0-17.700-14.300-32-32-32H256c-17.700 0-32 14.300-32 32v88c0 22.100-17.900 40-40 40H104c-22.100 0-40-17.900-40-40V287.600H32c-18 0-32-14-32-32.100c0-9 3-17 10-24L266.400 8c7-7 15-8 22-8s15 2 21 7L564.800 231.500c8 7 12 15 11 24z"/></svg> Dublin, Ireland</p>
<p><svg class="ico" viewBox="0 0 512 512"><path d="M48 64C21.500 64 0 85.500 0 112c0 15.100 7.100 29.300 19.200 38.400L236.800 313.600c11.400 8.500 27 8.500 38.400 0L492.800 150.400c12.100-9.100 19.200-23.300 19.200-38.400c0-26.500-21.500-48-48-48H48zM0 176V384c0 35.300 28.700 64 64 64H448c35.300 0 64-28.700 64-64V176L294.400 339.200c-22.800 17.100-54 17.100-76.800 0L0 176z"/></svg> info@hookahculture.ie</p>
<p class="tel"><svg class="ico" viewBox="0 0 512 512"><path d="M164.900 24.600c-7.700-18.600-28-28.500-47.400-23.200l-88 24C12.100 30.200 0 46 0 64C0 311.400 200.600 512 448 512c18 0 33.800-12.100 38.600-29.500l24-88c5.300-19.400-4.600-39.700-23.200-47.400l-96-40c-16.300-6.800-35.200-2.100-46.300 11.600L304.700 368C234.300 334.700 177.300 277.700 144 207.300L193.300 167c13.700-11.200 18.400-30 11.600-46.300l-40-96z"/></svg> +353 867 567 88</p>
<p class="tel"><svg class="ico" viewBox="0 0 512 512"><path fill-rule="evenodd" d="M128 0C92.700 0 64 28.700 64 64v96h64V64H354.700L384 93.300V160h64V93.300c0-17-6.700-33.300-18.700-45.300L400 18.700C388 6.700 371.700 0 354.700 0H128zM384 352v96H128V352H384zm64 32h32c17.700 0 32-14.300 32-32V256c0-35.300-28.700-64-64-64H64c-35.300 0-64 28.700-64 64v96c0 17.700 14.300 32 32 32H64v64c0 35.300 28.700 64 64 64H384c35.300 0 64-28.700 64-64V384zM432 248a24 24 0 1 1 0 48 24 24 0 1 1 0-48z"/></svg> +353 234 567 89</p></div>
<div class="col-2 mx-auto text-center newsletter">
<svg class="ico big" viewBox="0 0 512 512"><path d="M64 112c-8.800 0-16 7.200-16 16v22.100L220.500 291.700c20.700 17 50.400 17 71.100 0L464 150.100V128c0-8.800-7.200-16-16-16H64zM48 212.200V384c0 8.800 7.200 16 16 16H448c8.800 0 16-7.200 16-16V212.200L322 328.800c-38.400 31.500-93.700 31.500-132 0L48 212.200zM0 128C0 92.700 28.700 64 64 64H448c35.300 0 64 28.700 64 64V384c0 35.300-28.700 64-64 64H64c-35.300 0-64-28.700-64-64V128z"/></svg>
<p>Join our weekly<br>newsletter and immerse<br>yourself in inspiration.<br>Stay in the loop with the<br>latest trends and<br>exclusive offers.</p>
<input class="form-control" placeholder="Enter your email">
<button class="btn btn-violet w-100">Subscribe</button>
<button class="btn btn-warning w-100 unsub">Unsubscribe</button>
</div>
</div></div>
</section>
<div class="copybar d-flex justify-content-center align-items-center"><span>© 2024 Copyright: For Educational Purpose Only! <a href="#">Privacy Policy</a></span></div>
</footer>
<script src="https://cdn.jsdelivr.net/npm/bootstrap@5.3.0/dist/js/bootstrap.bundle.min.js"></script>
</body>
</html>
